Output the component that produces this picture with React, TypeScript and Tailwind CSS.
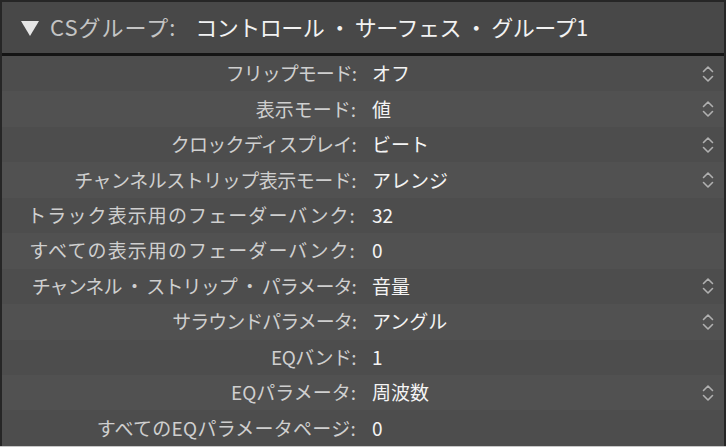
import React from "react";

const rows: { label: string; value: string; chevron: boolean; track: string }[] = [
  { label: "フリップモード:", value: "オフ", chevron: true, track: "tracking-[-1px]" },
  { label: "表示モード:", value: "値", chevron: true, track: "tracking-[0px]" },
  { label: "クロックディスプレイ:", value: "ビート", chevron: true, track: "tracking-[-0.8px]" },
  { label: "チャンネルストリップ表示モード:", value: "アレンジ", chevron: true, track: "tracking-[-0.5px]" },
  { label: "トラック表示用のフェーダーバンク:", value: "32", chevron: false, track: "tracking-[1.1px]" },
  { label: "すべての表示用のフェーダーバンク:", value: "0", chevron: false, track: "tracking-[1.1px]" },
  { label: "チャンネル ・ ストリップ ・ パラメータ:", value: "音量", chevron: true, track: "tracking-[-0.9px]" },
  { label: "サラウンドパラメータ:", value: "アングル", chevron: true, track: "tracking-[-1px]" },
  { label: "EQバンド:", value: "1", chevron: false, track: "tracking-[-0.6px]" },
  { label: "EQパラメータ:", value: "周波数", chevron: true, track: "tracking-[0px]" },
  { label: "すべてのEQパラメータページ:", value: "0", chevron: false, track: "tracking-[0.25px]" },
];

function Chevron() {
  return (
    <svg width="12" height="18" viewBox="0 0 12 18" fill="none" stroke="#b0b0b0" strokeWidth="1.6" strokeLinecap="round" strokeLinejoin="round">
      <path d="M1.5 6.5 L6 2 L10.5 6.5" />
      <path d="M1.5 11.5 L6 16 L10.5 11.5" />
    </svg>
  );
}

export default function App() {
  return (
    <div
      className="w-[726px] h-[447px] bg-[#262626] flex flex-col pl-[2px] pr-[2px] pt-[2px] overflow-hidden"
      style={{ fontFamily: '"Noto Sans CJK JP", "Noto Sans", sans-serif' }}
    >
      <div className="h-[51px] bg-[#484848] flex items-center pl-[19px] shrink-0">
        <svg width="18" height="15" viewBox="0 0 18 15" className="mr-[11px] mt-[1px]">
          <path d="M0 0 L18 0 L9 15 Z" fill="#e6e6e6" />
        </svg>
        <div className="flex items-center pb-[3px]">
          <span className="text-[22px] text-[#c4c4c4] leading-none tracking-[1px]">CSグループ:</span>
          <span className="text-[22px] text-[#f2f2f2] leading-none ml-[19px] tracking-[-0.5px]">コントロール ・ サーフェス ・ グループ1</span>
        </div>
      </div>
      <div className="h-[3px] bg-[#141414] shrink-0" />
      <div className="flex flex-col flex-1">
        {rows.map((r, i) => (
          <div
            key={i}
            className={`h-[35.45px] flex items-center shrink-0 ${i % 2 === 0 ? "bg-[#4d4d4d]" : "bg-[#515151]"}`}
          >
            <div className={`w-[354px] text-right text-[19px] text-[#cfcfcf] leading-none whitespace-nowrap pb-[2px] ${r.track}`}>
              {r.label}
            </div>
            <div className="flex-1 pl-[16px] text-[19px] text-[#f4f4f4] leading-none pb-[2px]">{r.value}</div>
            <div className="w-[22px] flex justify-start">{r.chevron ? <Chevron /> : null}</div>
          </div>
        ))}
      </div>
      <div className="h-[1px] bg-[#c8c8c8] shrink-0 -mx-[2px]" />
    </div>
  );
}
